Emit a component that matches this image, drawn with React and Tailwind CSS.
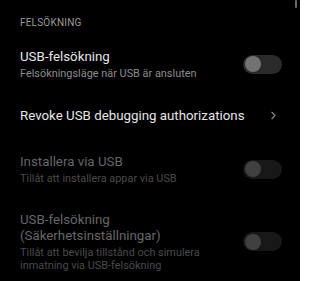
import { ChevronRight } from "lucide-react";

function Toggle({ disabled }) {
  return (
    <div
      className={
        "w-[39px] h-[19px] rounded-full flex items-center px-[2px] shrink-0 " +
        (disabled ? "bg-[#181818]" : "bg-[#2a2a2a]")
      }
    >
      <div
        className={
          "w-[16px] h-[16px] rounded-full " +
          (disabled ? "bg-[#404040]" : "bg-[#727272]")
        }
      />
    </div>
  );
}

function Row({ title, subtitle, disabled, children }) {
  return (
    <div className="flex items-center pl-5 pr-[18px]">
      <div className="flex-1 min-w-0">
        <div
          className={
            "text-[13.3px] leading-[16px] " +
            (disabled ? "text-[#666666]" : "text-[#e6e6e6]")
          }
        >
          {title}
        </div>
        {subtitle && (
          <div
            className={
              "text-[10.9px] leading-[13px] mt-[1.5px] " +
              (disabled ? "text-[#4a4a4a]" : "text-[#8c8c8c]")
            }
          >
            {subtitle}
          </div>
        )}
      </div>
      {children}
    </div>
  );
}

export default function App() {
  return (
    <main
      className="relative w-[300px] h-[281px] bg-black overflow-hidden"
      style={{ fontFamily: "Roboto, 'Noto Sans', sans-serif" }}
    >
      <div className="absolute right-[3px] top-0 w-[2px] h-[8px] rounded-full bg-[#6a6a6a]" />
      <div className="pt-[17px] pl-5 text-[10px] leading-[12px] text-[#9a9a9a] tracking-[0.2px]">
        FELSÖKNING
      </div>
      <div className="mt-[20px]">
        <Row title="USB-felsökning" subtitle="Felsökningsläge när USB är ansluten">
          <Toggle />
        </Row>
      </div>
      <div className="mt-[28px]">
        <Row title="Revoke USB debugging authorizations">
          <ChevronRight className="w-[13px] h-[13px] text-[#8a8a8a] mr-[2px]" strokeWidth={2} />
        </Row>
      </div>
      <div className="mt-[30.5px]">
        <Row title="Installera via USB" subtitle="Tillåt att installera appar via USB" disabled>
          <Toggle disabled />
        </Row>
      </div>
      <div className="mt-[27.5px]">
        <Row
          title={<>USB-felsökning<br />(Säkerhetsinställningar)</>}
          subtitle={<>Tillåt att bevilja tillstånd och simulera<br />inmatning via USB-felsökning</>}
          disabled
        >
          <Toggle disabled />
        </Row>
      </div>
    </main>
  );
}
